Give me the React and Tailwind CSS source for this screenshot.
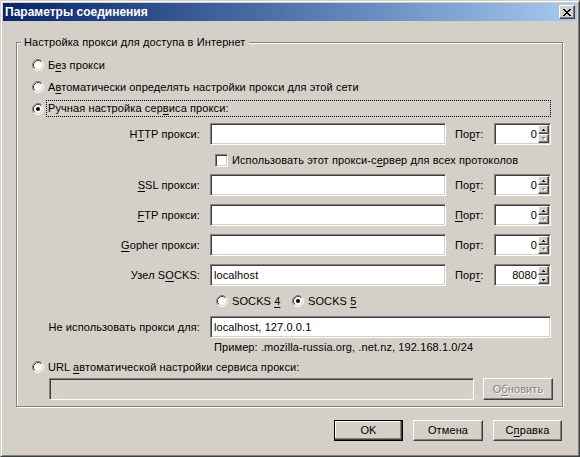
import React from "react";

const sunken =
  "border border-t-[#808080] border-l-[#808080] border-b-white border-r-white shadow-[inset_1px_1px_0_#404040,inset_-1px_-1px_0_#d4d0c8]";
const raised =
  "border border-t-white border-l-white border-b-[#404040] border-r-[#404040] shadow-[inset_-1px_-1px_0_#808080]";
const disabledText = "text-[#808080] [text-shadow:1px_1px_0_#fff]";

function Radio({ checked }) {
  return (
    <svg width="12" height="12" viewBox="0 0 12 12" className="shrink-0">
      <circle cx="6" cy="6" r="5" fill="#fff" />
      <path d="M2.11 9.89A5.5 5.5 0 0 1 9.89 2.11" fill="none" stroke="#808080" />
      <path d="M9.89 2.11A5.5 5.5 0 0 1 2.11 9.89" fill="none" stroke="#fff" />
      <path d="M2.82 9.18A4.5 4.5 0 0 1 9.18 2.82" fill="none" stroke="#404040" />
      <path d="M9.18 2.82A4.5 4.5 0 0 1 2.82 9.18" fill="none" stroke="#d4d0c8" />
      {checked && <circle cx="6" cy="6" r="2" fill="#000" />}
    </svg>
  );
}

function U({ children }) {
  return <span className="underline underline-offset-[2px]">{children}</span>;
}

function Spin({ downEnabled }) {
  return (
    <div className="flex flex-col w-[11px] shrink-0">
      <div className={`h-[9px] flex items-center justify-center bg-[#d4d0c8] ${raised}`}>
        <svg width="3" height="2" viewBox="0 0 3 2" shapeRendering="crispEdges">
          <path d="M1 0h1v1h1v1H0V1h1z" fill="#000" />
        </svg>
      </div>
      <div className={`h-[9px] flex items-center justify-center bg-[#d4d0c8] ${raised}`}>
        {downEnabled ? (
          <svg width="3" height="2" viewBox="0 0 3 2" shapeRendering="crispEdges">
            <path d="M0 0h3v1H2v1H1V1H0z" fill="#000" />
          </svg>
        ) : (
          <svg width="4" height="3" viewBox="0 0 4 3" shapeRendering="crispEdges">
            <path d="M1 1h3v1H3v1H2V2H1z" fill="#fff" />
            <path d="M0 0h3v1H2v1H1V1H0z" fill="#808080" />
          </svg>
        )}
      </div>
    </div>
  );
}

function TextField({ w, value, disabled }) {
  return (
    <div
      className={`${w} h-[22px] flex items-center pl-[3px] ${sunken} ${
        disabled ? "bg-[#d4d0c8]" : "bg-white"
      }`}
    >
      {value}
    </div>
  );
}

function ProxyRow({ label, value, portLabel, port, downEnabled }) {
  return (
    <div className="flex items-center h-[22px]">
      <div className="w-[183px] text-right">{label}</div>
      <div className="ml-[10px]">
        <TextField w="w-[236px]" value={value} />
      </div>
      <div className="ml-[9px] w-[39px]">{portLabel}</div>
      <div className={`w-[57px] h-[22px] flex bg-white p-[1px] ${sunken}`}>
        <div className="flex-1 flex items-center justify-end pr-[1px]">{port}</div>
        <Spin downEnabled={downEnabled} />
      </div>
    </div>
  );
}

function Button({ children, w, isDefault, disabled }) {
  const frame = isDefault
    ? "border border-black shadow-[inset_-1px_-1px_0_#404040,inset_-2px_-2px_0_#808080,inset_1px_1px_0_#fff]"
    : raised;
  return (
    <div
      className={`${w} h-[21px] flex items-center justify-center bg-[#d4d0c8] ${frame} ${
        disabled ? disabledText : ""
      }`}
    >
      {children}
    </div>
  );
}

export default function App() {
  return (
    <div className="w-[580px] h-[457px] bg-[#d4d0c8] border border-t-[#d4d0c8] border-l-[#d4d0c8] border-b-[#404040] border-r-[#404040] shadow-[inset_1px_1px_0_#fff,inset_-1px_-1px_0_#808080] p-[2px] flex flex-col text-[11px] leading-[13px] tracking-[0.1px] text-black font-['Liberation_Sans',Arial,sans-serif]">
      {/* Title bar */}
      <div className="h-[18px] shrink-0 flex items-center justify-between pl-[2px] pr-[2px] bg-linear-to-r from-[#0a246a] to-[#a6caf0]">
        <span className="font-bold text-white text-[12px] tracking-normal">Параметры соединения</span>
        <div className={`w-[16px] h-[14px] flex items-center justify-center bg-[#d4d0c8] ${raised}`}>
          <svg width="8" height="7" viewBox="0 0 8 7" shapeRendering="crispEdges">
            <path
              d="M0 0h2v1h1v1h2V1h1V0h2v1H7v1H6v1H5v1h1v1h1v1h1v1H6V6H5V5H3v1H2v1H0V6h1V5h1V4h1V3H2V2H1V1H0z"
              fill="#000"
            />
          </svg>
        </div>
      </div>

      {/* Client area */}
      <div className="flex-1 flex flex-col">
        <fieldset className="mt-[15px] ml-[13px] mr-[14px] border border-[#808080] shadow-[1px_1px_0_#fff,inset_1px_1px_0_#fff]">
          <legend className="ml-[4px] px-[3px] bg-[#d4d0c8] leading-[13px]">
            Настройка прокси для доступа в Интернет
          </legend>
          <div className="flex flex-col pb-[6px]">
            <div className="mt-[8px] h-[16px] flex items-center pl-[15px] gap-[4px]">
              <Radio />
              <span>
                Б<U>е</U>з прокси
              </span>
            </div>
            <div className="mt-[6px] h-[16px] flex items-center pl-[15px] gap-[4px]">
              <Radio />
              <span>
                А<U>в</U>томатически определять настройки прокси для этой сети
              </span>
            </div>
            <div className="mt-[5px] h-[17px] flex items-center pl-[15px] gap-[2px]">
              <Radio checked />
              <span className="w-[505px] h-[17px] flex items-center px-[1px] border border-dotted border-black">
                <span>
                  Ручная настройка сер<U>в</U>иса прокси:
                </span>
              </span>
            </div>

            <div className="mt-[6px]">
              <ProxyRow
                label={
                  <>
                    H<U>T</U>TP прокси:
                  </>
                }
                value=""
                portLabel={
                  <>
                    По<U>р</U>т:
                  </>
                }
                port="0"
              />
            </div>

            <div className="mt-[7px] h-[16px] flex items-center pl-[198px] gap-[4px]">
              <div className={`w-[13px] h-[13px] bg-white ${sunken}`} />
              <span>
                Использовать этот прокси-с<U>е</U>рвер для всех протоколов
              </span>
            </div>

            <div className="mt-[6px]">
              <ProxyRow
                label={
                  <>
                    <U>S</U>SL прокси:
                  </>
                }
                value=""
                portLabel={
                  <>
                    По<U>р</U>т:
                  </>
                }
                port="0"
              />
            </div>
            <div className="mt-[8px]">
              <ProxyRow
                label={
                  <>
                    <U>F</U>TP прокси:
                  </>
                }
                value=""
                portLabel={
                  <>
                    <U>П</U>орт:
                  </>
                }
                port="0"
              />
            </div>
            <div className="mt-[8px]">
              <ProxyRow
                label={
                  <>
                    <U>G</U>opher прокси:
                  </>
                }
                value=""
                portLabel="Порт:"
                port="0"
              />
            </div>
            <div className="mt-[8px]">
              <ProxyRow
                label={
                  <>
                    Узел S<U>O</U>CKS:
                  </>
                }
                value="localhost"
                portLabel={
                  <>
                    Пор<U>т</U>:
                  </>
                }
                port="8080"
                downEnabled
              />
            </div>

            <div className="mt-[7px] h-[16px] flex items-center pl-[199px]">
              <div className="w-[76px] flex items-center gap-[4px]">
                <Radio />
                <span>
                  SOCKS <U>4</U>
                </span>
              </div>
              <div className="flex items-center gap-[4px]">
                <Radio checked />
                <span>
                  SOCKS <U>5</U>
                </span>
              </div>
            </div>

            <div className="mt-[7px] h-[22px] flex items-center">
              <div className="w-[183px] text-right">
                Не использовать прокси <U>д</U>ля:
              </div>
              <div className="ml-[10px]">
                <TextField w="w-[341px]" value="localhost, 127.0.0.1" />
              </div>
            </div>

            <div className="mt-[2px] h-[14px] flex items-center pl-[197px]">
              Пример: .mozilla-russia.org, .net.nz, 192.168.1.0/24
            </div>

            <div className="mt-[5px] h-[16px] flex items-center pl-[15px] gap-[4px]">
              <Radio />
              <span>
                URL <U>а</U>втоматической настройки сервиса прокси:
              </span>
            </div>

            <div className="mt-[3px] h-[22px] flex items-center pl-[32px]">
              <TextField w="w-[425px]" value="" disabled />
              <div className="ml-[9px]">
                <div
                  className={`w-[70px] h-[22px] flex items-center justify-center bg-[#d4d0c8] ${raised} ${disabledText}`}
                >
                  <span>
                    О<U>б</U>новить
                  </span>
                </div>
              </div>
            </div>
          </div>
        </fieldset>

        <div className="mt-[13px] flex justify-end pr-[15px] gap-[10px]">
          <Button w="w-[69px]" isDefault>
            OK
          </Button>
          <Button w="w-[70px]">Отмена</Button>
          <Button w="w-[69px]">
            С<U>п</U>равка
          </Button>
        </div>
      </div>
    </div>
  );
}
